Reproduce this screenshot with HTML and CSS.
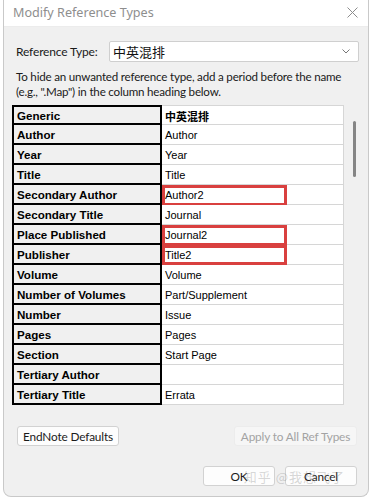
FILE: index.html
```html
<!DOCTYPE html>
<html>
<head>
<meta charset="utf-8">
<link rel="stylesheet" href="styles.css">
</head>
<body>
<div class="window">
  <div class="titlebar">
    <span class="title">Modify Reference Types</span>
    <svg class="close" width="11" height="11" viewBox="0 0 11 11"><path d="M0.5 0.5 L10.5 10.5 M10.5 0.5 L0.5 10.5" stroke="#8c8c8c" stroke-width="1" fill="none"/></svg>
  </div>
  <div class="content">
    <div class="typerow">
      <span class="label">Reference Type:</span>
      <div class="select">
        <span class="selval">中英混排</span>
        <svg class="chev" width="8" height="5" viewBox="0 0 8 5"><path d="M0.5 0.5 L4 4 L7.5 0.5" stroke="#777" stroke-width="1" fill="none"/></svg>
      </div>
    </div>
    <p class="hint">To hide an unwanted reference type, add a period before the name<br>(e.g., ".Map") in the column heading below.</p>
    <div class="tablewrap">
      <div class="grid">
        <div class="lc first">Generic</div><div class="rc first cjk">中英混排</div>
        <div class="lc">Author</div><div class="rc">Author</div>
        <div class="lc">Year</div><div class="rc">Year</div>
        <div class="lc">Title</div><div class="rc">Title</div>
        <div class="lc">Secondary Author</div><div class="rc">Author2<span class="mark"></span></div>
        <div class="lc">Secondary Title</div><div class="rc">Journal</div>
        <div class="lc">Place Published</div><div class="rc">Journal2<span class="mark"></span></div>
        <div class="lc">Publisher</div><div class="rc">Title2<span class="mark short"></span></div>
        <div class="lc">Volume</div><div class="rc">Volume</div>
        <div class="lc">Number of Volumes</div><div class="rc">Part/Supplement</div>
        <div class="lc">Number</div><div class="rc">Issue</div>
        <div class="lc">Pages</div><div class="rc">Pages</div>
        <div class="lc">Section</div><div class="rc">Start Page</div>
        <div class="lc">Tertiary Author</div><div class="rc"></div>
        <div class="lc">Tertiary Title</div><div class="rc">Errata</div>
      </div>
      <div class="scroll"><div class="thumb"></div></div>
    </div>
    <div class="btnrow">
      <button class="btn defaults">EndNote Defaults</button>
      <button class="btn disabled applyall">Apply to All Ref Types</button>
    </div>
    <div class="okrow">
      <button class="btn ok">OK</button>
      <button class="btn cancel">Cancel</button>
      <span class="watermark">知乎 @我想飞了</span>
    </div>
  </div>
</div>
</body>
</html>
```
FILE: styles.css
```css
html, body {
  margin: 0;
  padding: 0;
  background: #ffffff;
}
body {
  width: 372px;
  height: 499px;
  overflow: hidden;
  font-family: Lato, "Noto Sans CJK SC", sans-serif;
}
.window {
  margin-left: 3px;
  width: 366px;
  height: 497px;
  box-sizing: border-box;
  border: 1px solid #c9c9c9;
  border-top: none;
  border-radius: 0 0 8px 8px;
  background: #f0f0f0;
  overflow: hidden;
  display: flex;
  flex-direction: column;
}
.titlebar {
  height: 27px;
  flex: none;
  background: #ffffff;
  border-bottom: 1px solid #ececec;
  box-sizing: border-box;
  display: flex;
  align-items: center;
  justify-content: space-between;
  padding: 0 9px 0 9px;
}
.title {
  font-family: "Noto Sans", sans-serif;
  font-size: 12.6px;
  color: #8e8e8e;
  margin-top: -1px;
}
.close {
  margin-top: -2px;
  margin-right: 1px;
}
.content {
  position: relative;
  padding: 0 9px 0 8px;
  flex: 1;
}
.typerow {
  margin-top: 14px;
  display: flex;
  align-items: center;
  height: 21px;
}
.label {
  font-size: 12px;
  letter-spacing: -0.15px;
  color: #1a1a1a;
  padding-left: 4px;
}
.select {
  margin-left: auto;
  width: 250px;
  height: 21px;
  box-sizing: border-box;
  background: #ffffff;
  border: 1px solid #cfcfcf;
  border-radius: 2px;
  display: flex;
  align-items: center;
  justify-content: space-between;
  padding: 0 8px 0 3px;
}
.selval {
  font-family: "Noto Sans CJK SC", sans-serif;
  font-size: 13px;
  color: #111;
}
.hint {
  margin: 8px 0 0 4px;
  font-size: 11.6px;
  letter-spacing: -0.2px;
  line-height: 14.5px;
  white-space: nowrap;
  color: #1a1a1a;
}
.tablewrap {
  margin-top: 6px;
  display: flex;
}
.grid {
  display: grid;
  grid-template-columns: 150px 182px;
  grid-auto-rows: 20px;
  font-family: "Liberation Sans", sans-serif;
  font-size: 11px;
  color: #000;
}
.lc {
  background: #f0f0f0;
  border-left: 2px solid #000;
  border-right: 2px solid #000;
  border-bottom: 2px solid #000;
  box-sizing: border-box;
  font-weight: bold;
  font-size: 11.6px;
  padding-left: 3px;
  display: flex;
  align-items: center;
  padding-top: 1px;
}
.lc.first {
  border-top: 2px solid #000;
}
.rc {
  position: relative;
  background: #ffffff;
  border-right: 1px solid #d6d6d6;
  border-bottom: 1px solid #d6d6d6;
  box-sizing: border-box;
  padding-left: 3px;
  display: flex;
  align-items: center;
  padding-top: 1px;
}
.rc.first {
  border-top: 1px solid #d6d6d6;
}
.rc.cjk {
  font-family: "Noto Sans CJK SC", sans-serif;
  font-weight: bold;
  font-size: 11px;
}
.mark {
  position: absolute;
  left: 0;
  top: 0;
  width: 125px;
  height: 21px;
  box-sizing: border-box;
  border: 3px solid #d9403f;
}
.mark.short {
  height: 20px;
}
.scroll {
  width: 20px;
  position: relative;
}
.thumb {
  position: absolute;
  left: 9px;
  top: 16px;
  width: 3px;
  height: 56px;
  background: #858585;
  border-radius: 2px;
}
.btn {
  font-family: Lato, sans-serif;
  font-size: 11.8px;
  letter-spacing: -0.15px;
  height: 20px;
  box-sizing: border-box;
  background: #fdfdfd;
  border: 1px solid #d2d2d2;
  border-radius: 3px;
  color: #1a1a1a;
  padding: 0;
  margin: 0;
  white-space: nowrap;
}
.btnrow {
  margin-top: 21px;
  display: flex;
  justify-content: space-between;
  padding-left: 5px;
  padding-right: 2px;
}
.defaults {
  width: 102px;
}
.applyall {
  width: 123px;
}
.btn.disabled {
  background: #f6f6f6;
  border-color: #ececec;
  color: #a3a3a3;
}
.okrow {
  position: relative;
  margin-top: 20px;
  display: flex;
  justify-content: flex-end;
  gap: 10px;
  padding-right: 2px;
}
.ok, .cancel {
  width: 72px;
}
.watermark {
  position: absolute;
  right: 14px;
  top: 1px;
  font-family: "Noto Sans CJK SC", sans-serif;
  font-size: 13px;
  color: rgba(120, 120, 120, 0.3);
  letter-spacing: 1px;
  pointer-events: none;
}
```
